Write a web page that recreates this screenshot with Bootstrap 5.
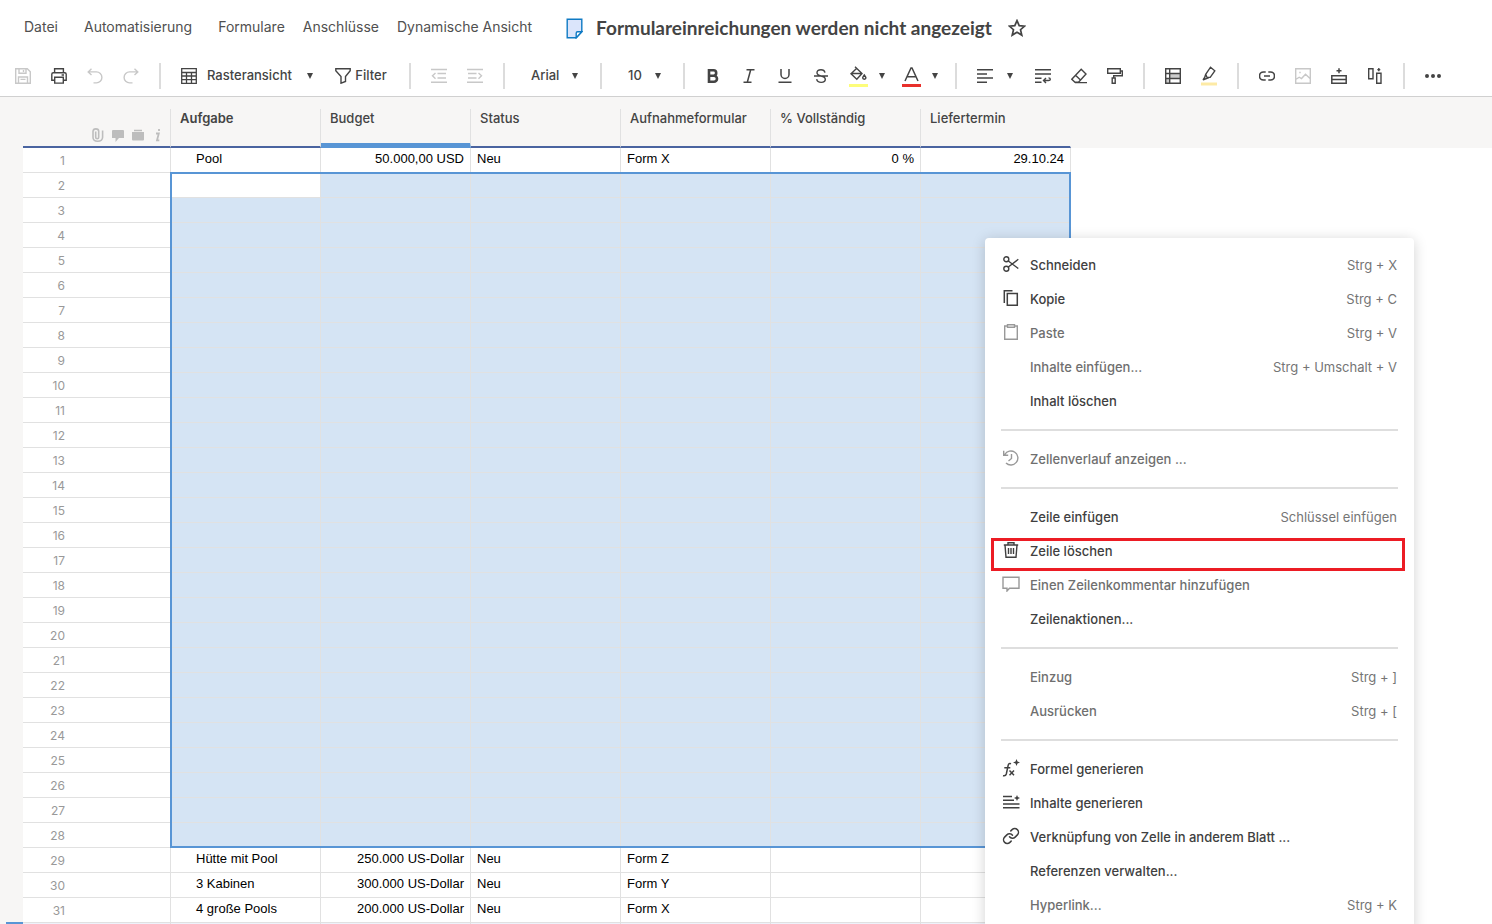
<!DOCTYPE html>
<html lang="de">
<head>
<meta charset="utf-8">
<meta name="viewport" content="width=device-width, initial-scale=1">
<title>Formulareinreichungen werden nicht angezeigt</title>
<link rel="stylesheet" href="https://cdn.jsdelivr.net/npm/bootstrap@5.3.0/dist/css/bootstrap.min.css">
<style>
  :root { --ink: #444; --muted: #757575; --line: #e1e1e1; --panel: #f7f6f5; --accent: #5895d5; --sel: #d5e4f4; }
  body { font-family: Inter, "Liberation Sans", sans-serif; font-size: 13px; line-height: 20px; color: var(--ink); background: #fff; }
  svg { display: block; fill: none; stroke: currentColor; flex: none; }
  .ic { width: 16px; height: 16px; }
  .ic:not([stroke-width]) { stroke-width: 1.4; }

  .menubar { height: 56px; padding: 0 24px; }
  .menubar .nav { gap: 18px; }
  .menubar .nav-link { padding: 0; color: #505050; font-size: 14px; line-height: 20px; padding-bottom: 2px; }
  .menubar .nav-wide { margin-right: 8px; }
  .menubar h1 { font: 700 19px/24px Lato, "Open Sans", sans-serif; }
  .doc-icon { margin-left: 34px; margin-right: 13px; color: #0f7ac4; }
  .menubar .btn { color: var(--ink); }

  .tools { height: 41px; padding-left: 5px; border-bottom: 1px solid #d0d0d0; }
  .tools .btn { --bs-btn-padding-x: 0; --bs-btn-padding-y: 0; --bs-btn-border-width: 0; --bs-btn-color: var(--ink); --bs-btn-font-size: 13px; --bs-btn-disabled-opacity: 1; --bs-btn-disabled-color: #c8c8c8;
    height: 36px; width: 36px; display: flex; align-items: center; justify-content: center; flex: none; }
  .tools .btn-filter { width: 74px; gap: 4px; font-weight: 500; padding-right: 2px; }
  .tools .btn-split { width: 53px; justify-content: flex-start; padding-left: 10px; gap: 11px; }
  .tools .btn-align { width: 58px; justify-content: flex-start; padding-left: 10px; gap: 14px; }
  .vsep { width: 2px; height: 26px; margin: 0 10px; background: #dcdcdc; flex: none; }
  .caret { width: 6px; height: 6px; fill: currentColor; stroke: none; }
  .tools .form-select { border: 0; padding: 0; height: 36px; font-size: 13px; font-weight: 500; color: var(--ink); background-color: transparent; flex: none;
    --bs-form-select-bg-img: url("data:image/svg+xml,%3csvg xmlns='http://www.w3.org/2000/svg' viewBox='0 0 6 6'%3e%3cpath d='M0 0h6L3 6z' fill='%23444'/%3e%3c/svg%3e");
    background-image: var(--bs-form-select-bg-img); background-size: 6px 6px; }
  .view-pick { width: 154px; padding-left: 10px; gap: 10px; }
  .view-pick .form-select { width: 118px; background-position: right 12px center; }
  .tools .font-pick { width: 75px; padding-left: 16px; background-position: right 12px center; }
  .tools .size-pick { width: 61px; padding-left: 16px; background-position: right 12px center; }

  .sheet { background: linear-gradient(var(--panel), var(--panel)) 0 0 / 100% 51px no-repeat, linear-gradient(var(--panel), var(--panel)) 0 0 / 23px 100% no-repeat; padding-left: 23px; }
  .grid-wrap { padding-top: 12px; }
  .sheet-grid { width: 1048px; table-layout: fixed; border-collapse: separate; border-spacing: 0; }
  .sheet-grid th, .sheet-grid td { border-right: 1px solid var(--line); white-space: nowrap; overflow: hidden; }
  .sheet-grid thead th { height: 39px; padding: 0 9px; vertical-align: top; font-weight: 500; line-height: 18px; border-bottom: 2px solid #4a64a0; }
  .sheet-grid thead th:last-child { border-right-color: transparent; }
  .sheet-grid thead th.first { font-weight: 600; }
  .sheet-grid thead th.active { border-bottom: 5px solid var(--accent); }
  .sheet-grid tbody td, .sheet-grid tbody th { height: 25px; padding: 0 6px; border-bottom: 1px solid var(--line); font: 13px/22px "Liberation Sans", Arial, sans-serif; color: #000; vertical-align: top; background: #fff; }
  .sheet-grid tbody th { font: 12px/22px Inter, sans-serif; color: #999; text-align: right; padding: 2px 105px 0 0; }
  .sheet-grid tbody td.task { padding-left: 25px; }
  .sheet-grid tbody tr.picked td { background: var(--sel); }
  .sheet-grid tbody tr.picked td.origin { background: #fff; }
  .sheet-grid tbody tr.next > * { background: #eef2fb; }
  .row-marks { color: #bdbdbd; padding-top: 19px; padding-right: 2px; }
  .row-marks span { width: 20px; display: flex; justify-content: center; }
  .selection { left: 147px; top: 75px; width: 901px; height: 676px; border: 2px solid var(--accent); pointer-events: none; }
  .gutter-mark { left: 6px; bottom: 0; width: 17px; height: 2px; background: var(--accent); }

  .context { left: 985px; top: 238px; width: 429px; padding: 10px 16px; background: #fff; border-radius: 4px; box-shadow: 0 2px 14px rgba(0,0,0,.18); z-index: 5; }
  .context button { width: 100%; height: 34px; padding: 0 1px 0 1px; border: 0; background: none; color: #404040; font-weight: 500; text-align: left; position: relative; }
  .context .slot { width: 18px; margin-right: 10px; padding-bottom: 2px; display: flex; justify-content: center; }
  .context kbd { margin-left: auto; padding: 0; background: none; font: 400 13px/20px Inter, sans-serif; color: var(--muted); }
  .context button:disabled { color: #6f6f6f; }
  .context button:disabled svg { color: #999; }
  .context hr { margin: 11px 0; border: 0; height: 2px; background: #dedede; opacity: 1; }
  .context .ring::after { content: ""; position: absolute; inset: 4px -7px -3px -10px; border: 3px solid #ec1c24; }
</style>
</head>
<body class="vh-100 overflow-hidden d-flex flex-column position-relative">

<header class="menubar d-flex align-items-center flex-shrink-0">
  <nav class="nav flex-nowrap text-nowrap" aria-label="Hauptmenü">
    <a class="nav-link nav-wide" href="#">Datei</a>
    <a class="nav-link nav-wide" href="#">Automatisierung</a>
    <a class="nav-link" href="#">Formulare</a>
    <a class="nav-link" href="#">Anschlüsse</a>
    <a class="nav-link" href="#">Dynamische Ansicht</a>
  </nav>
  <svg class="doc-icon" width="17" height="21" viewBox="0 0 17 21" stroke-width="1.4"><path fill="#dbe5fb" d="M1.2 1.2h14.600v12.600l-5.600 6H1.200z"/><path fill="#fff" d="M15.800 13.800h-4.200q-1.400 0-1.400 1.400v4.600z"/></svg>
  <h1 class="m-0 text-nowrap">Formulareinreichungen werden nicht angezeigt</h1>
  <button type="button" class="btn p-0 border-0 ms-3" aria-label="Favorit"><svg width="18" height="18" viewBox="0 0 18 18" stroke-width="1.7"><path d="m9 1.600 2.200 5 5.400.5-4.100 3.600 1.300 5.400L9 13.200l-4.800 2.900 1.300-5.400-4.100-3.600 5.400-.5z"/></svg></button>
</header>

<div class="tools d-flex align-items-center flex-shrink-0" role="toolbar" aria-label="Werkzeuge">
  <button class="btn" disabled aria-label="Speichern"><svg class="ic" viewBox="0 0 16 16"><path d="M.7.7h11.600l3 3v11.600H.7zM4 .7v4.600h7V.7M8.500 2v2M3.500 15V9h9v6M5.500 11.400h5"/></svg></button>
  <button class="btn" aria-label="Drucken"><svg class="ic" viewBox="0 0 16 16"><path d="M3.600 4.600V.8h8.800v3.800M3.600 12.200H.8V6.300q0-1.500 1.500-1.500h11.400q1.500 0 1.500 1.500v5.900h-2.800M3.700 9.200h8.600v5.900H3.700zM10.600 7h2.400"/></svg></button>
  <button class="btn" disabled aria-label="Rückgängig"><svg class="ic" viewBox="0 0 16 16"><path d="M4.500.8 1.200 3.900l3.300 3.100M1.200 3.900h8.200a5.500 5.500 0 0 1 0 11H6.500"/></svg></button>
  <button class="btn" disabled aria-label="Wiederholen"><svg class="ic" viewBox="0 0 16 16"><path d="m11.500.8 3.300 3.100L11.500 7M14.800 3.900H6.600a5.500 5.500 0 0 0 0 11h2.900"/></svg></button>
  <div class="vsep"></div>
  <div class="view-pick d-flex align-items-center flex-shrink-0">
    <svg class="ic" viewBox="0 0 16 16" stroke-width="1.3"><path d="M.7.7h14.600v14.600H.7zM.7 4.500h14.600M.7 8h14.600M.7 11.600h14.600M5.500 4.500v11M10.500 4.500v11"/></svg>
    <select class="form-select" aria-label="Ansicht"><option>Rasteransicht</option></select>
  </div>
  <button class="btn btn-filter"><svg class="ic" viewBox="0 0 16 16"><path d="M.8.8h14.400v2L10.500 8.500v5l-4.500 1.700V8.500L.8 2.800z"/></svg>Filter</button>
  <div class="vsep"></div>
  <button class="btn" disabled aria-label="Ausrücken"><svg class="ic" viewBox="0 0 16 16"><path d="M0 1.500h16M6.500 5.500H15M6.500 10H15M0 14.300h16M4.500 5 1.500 7.800l3 2.900"/></svg></button>
  <button class="btn" disabled aria-label="Einzug"><svg class="ic" viewBox="0 0 16 16"><path d="M0 1.500h16M1 5.500h8.500M1 10h8.500M0 14.300h16M11.500 5l3 2.800-3 2.900"/></svg></button>
  <div class="vsep"></div>
  <select class="form-select font-pick" aria-label="Schriftart"><option>Arial</option></select>
  <div class="vsep"></div>
  <select class="form-select size-pick" aria-label="Schriftgröße"><option>10</option></select>
  <div class="vsep"></div>
  <button class="btn" aria-label="Fett"><svg class="ic" viewBox="0 0 16 16" stroke-width="2.600"><path d="M4 2.300h4.500a2.700 2.700 0 0 1 0 5.400H4zM4 7.700h5a3 3 0 0 1 0 6H4z"/></svg></button>
  <button class="btn" aria-label="Kursiv"><svg class="ic" viewBox="0 0 16 16" stroke-width="1.500"><path d="M5.500 1.700h8M2.500 14.300h8M9.700 1.700 6.300 14.300"/></svg></button>
  <button class="btn" aria-label="Unterstrichen"><svg class="ic" viewBox="0 0 16 16" stroke-width="1.500"><path d="M4 1v5.500a4 4 0 0 0 8 0V1M1.500 14.300h13"/></svg></button>
  <button class="btn" aria-label="Durchgestrichen"><svg class="ic" viewBox="0 0 16 16"><path d="M12 4.600C11.600 2.700 10.200 1.700 8 1.700S4 2.800 4 4.800C4 6.700 5.500 7.400 8 8s4.300 1.300 4.300 3.300-1.700 3.100-4.100 3.100-4.200-1.200-4.500-3.200M1 8h14"/></svg></button>
  <button class="btn btn-split" aria-label="Füllfarbe"><svg width="19" height="22" viewBox="0 0 19 22" stroke-width="1.400"><path d="M6 1.800 13 8.500 7.800 14.200 2 8.700 7.800 3.300M2.300 8.500H13"/><path d="M15.300 9.800q-3.200 4.300 0 4.500 3.200-.2 0-4.500z"/><path d="M0 20.500h19" stroke="#fdfd7a" stroke-width="3"/></svg><svg class="caret" viewBox="0 0 6 6"><path d="M0 0h6L3 6z"/></svg></button>
  <button class="btn btn-split" aria-label="Textfarbe"><svg width="19" height="22" viewBox="0 0 19 22" stroke-width="1.500"><path d="M3 16 9 3h1l6 13M5 11.800h9"/><path d="M0 20.500h19" stroke="#e8302b" stroke-width="3"/></svg><svg class="caret" viewBox="0 0 6 6"><path d="M0 0h6L3 6z"/></svg></button>
  <div class="vsep"></div>
  <button class="btn btn-align" aria-label="Ausrichtung"><svg class="ic" viewBox="0 0 16 16"><path d="M0 1.700h16M0 6h10M0 10h16M0 14.300h10"/></svg><svg class="caret" viewBox="0 0 6 6"><path d="M0 0h6L3 6z"/></svg></button>
  <button class="btn" aria-label="Umbruch"><svg class="ic" viewBox="0 0 16 16"><path d="M0 1.700h16M0 6h16M0 10.200h6.500M0 14.300h6.500M8.500 12.500h5q1.800 0 1.800-1.300T13.500 9.900M11 10l-2.500 2.500L11 15"/></svg></button>
  <button class="btn" aria-label="Formatierung löschen"><svg class="ic" viewBox="0 0 16 16"><path d="M10.200 1.300 15 6 7.500 14.200H4L.8 11.200zM4.500 7.300l5 4.700M4 14.600h12"/></svg></button>
  <button class="btn" aria-label="Format übertragen"><svg class="ic" viewBox="0 0 16 16"><path d="M.7.800h12.600v4.400H.7zM13.300 3h2v4.700H6.700V10M5.200 10h3v5.300h-3z"/></svg></button>
  <div class="vsep"></div>
  <button class="btn" aria-label="Bedingte Formatierung"><svg class="ic" viewBox="0 0 16 16"><path d="M4.500 5.500h11v5h-11zM.7 10.500h4v5h-4z" fill="#ccc" stroke="none"/><path d="M.7.700h14.600v14.600H.7zM.7 5.500h14.600M.7 10.500h14.600M4.700.7v14.600"/></svg></button>
  <button class="btn" aria-label="Hervorheben"><svg width="16" height="20" viewBox="0 0 16 20" stroke-width="1.400"><path d="m9.500 1.200 4.300 3.600-4.600 6.600H6L4.700 8.300zM4.700 8.300 3 13.500l5-1.800M2 14l2-3"/><path d="M0 18h16" stroke="#fdeaa5" stroke-width="3"/></svg></button>
  <div class="vsep"></div>
  <button class="btn" aria-label="Link"><svg class="ic" viewBox="0 0 16 16" stroke-width="1.600"><path d="M6.700 4H4.500a3.700 3.700 0 0 0 0 8h2.200M9.300 4h2.200a3.700 3.700 0 0 1 0 8H9.300M5 8h6"/></svg></button>
  <button class="btn" disabled aria-label="Bild"><svg class="ic" viewBox="0 0 16 16"><path d="M.7.700h14.600v14.600H.7zM.7 11.500l3.500-2.300 2.300 1.300 4-4.300 4.800 4.500M4.300 4.500h1.400"/></svg></button>
  <button class="btn" aria-label="Zeile einfügen"><svg class="ic" viewBox="0 0 16 16" stroke-width="1.500"><path d="M.8 7.800h14.400v7.500H.8zM.8 11.500h14.400M8 .2v5M5.500 2.700h5"/></svg></button>
  <button class="btn" aria-label="Spalte einfügen"><svg class="ic" viewBox="0 0 16 16"><path d="M1.700.8h4.300v9.900H1.700zM9.700 5.300H14v9.900H9.700zM11.800 0v3.200M10.300 1.600h3"/></svg></button>
  <div class="vsep"></div>
  <button class="btn" aria-label="Mehr"><svg class="ic" viewBox="0 0 16 16"><path style="fill:currentColor;stroke:none" d="M0 8a2 2 0 1 0 4 0 2 2 0 1 0-4 0zM6 8a2 2 0 1 0 4 0 2 2 0 1 0-4 0zM12 8a2 2 0 1 0 4 0 2 2 0 1 0-4 0z"/></svg></button>
</div>

<main class="sheet flex-grow-1 overflow-hidden">
  <div class="grid-wrap position-relative">
    <table class="sheet-grid">
      <colgroup><col style="width:148px"><col><col><col><col><col><col></colgroup>
      <thead>
        <tr>
          <th class="p-0" aria-label="Zeileninfo">
            <div class="row-marks d-flex justify-content-end">
              <span><svg width="12" height="14" viewBox="0 0 12 14" stroke-width="1.600"><path d="M3.700 3.500v5.700q0 1.500 1.500 1.500t1.500-1.500V3.300Q6.700.9 3.900.9T1 3.500v5.700q0 4 4.700 4t4.900-4V2.500"/></svg></span>
              <span><svg width="12" height="14" viewBox="0 0 12 14"><path style="fill:currentColor;stroke:none" d="M0 3q0-1 1-1h10q1 0 1 1v7H7l-3.500 4v-4H0z"/></svg></span>
              <span><svg width="12" height="14" viewBox="0 0 12 14"><path style="fill:currentColor;stroke:none" d="M2 1.800h8v1.400H2zM0 4h12v7.500q0 1-1 1H1q-1 0-1-1z"/></svg></span>
              <span><svg width="6" height="14" viewBox="0 0 6 14" stroke-width="1.800"><path d="M1 5.500h2.800L2 12.300h2.300M4 1v2"/></svg></span>
            </div>
          </th>
          <th class="first">Aufgabe</th><th class="active">Budget</th><th>Status</th><th>Aufnahmeformular</th><th>% Vollständig</th><th>Liefertermin</th>
        </tr>
      </thead>
      <tbody id="rows"></tbody>
    </table>
    <div class="selection position-absolute"></div>
  </div>
</main>
<div class="gutter-mark position-absolute"></div>

<div class="context position-absolute" role="menu">
  <button class="d-flex align-items-center"><span class="slot"><svg class="ic" viewBox="0 0 16 16"><circle cx="3.300" cy="3.300" r="2.500"/><circle cx="3.300" cy="12.700" r="2.500"/><path d="m5.300 5 10 7.500M5.300 11l10-7.700"/></svg></span>Schneiden<kbd>Strg + X</kbd></button>
  <button class="d-flex align-items-center"><span class="slot"><svg class="ic" viewBox="0 0 16 16" stroke-width="1.500"><path d="M4.300 3.500h10v11.700h-10zM1.300 13V.8h8.200"/></svg></span>Kopie<kbd>Strg + C</kbd></button>
  <button class="d-flex align-items-center" disabled><span class="slot"><svg class="ic" viewBox="0 0 16 16"><path d="M4.500 2H1.700v13.300h12.600V2h-2.800M4.500.7h7v2.600h-7z"/></svg></span>Paste<kbd>Strg + V</kbd></button>
  <button class="d-flex align-items-center" disabled><span class="slot"></span>Inhalte einfügen...<kbd>Strg + Umschalt + V</kbd></button>
  <button class="d-flex align-items-center"><span class="slot"></span>Inhalt löschen</button>
  <hr>
  <button class="d-flex align-items-center" disabled><span class="slot"><svg class="ic" viewBox="0 0 16 16"><path d="M1.800 4.500A7 7 0 1 1 3 13M.7.800v4.400h4.500M8.500 4v4.500L5.500 11"/></svg></span>Zellenverlauf anzeigen ...</button>
  <hr>
  <button class="d-flex align-items-center"><span class="slot"></span>Zeile einfügen<kbd>Schlüssel einfügen</kbd></button>
  <button class="d-flex align-items-center ring"><span class="slot"><svg class="ic" viewBox="0 0 16 16"><path d="M.8 3h14.400M5 3V.7h6V3M2 3l1 12.300h10L14 3M5.500 6v6M8 6v6M10.500 6v6"/></svg></span>Zeile löschen</button>
  <button class="d-flex align-items-center" disabled><span class="slot"><svg width="18" height="16" viewBox="0 0 18 16" stroke-width="1.400"><path d="M1 1.200h16v11H7.500L5 15v-2.800H1z"/></svg></span>Einen Zeilenkommentar hinzufügen</button>
  <button class="d-flex align-items-center"><span class="slot"></span>Zeilenaktionen...</button>
  <hr>
  <button class="d-flex align-items-center" disabled><span class="slot"></span>Einzug<kbd>Strg + ]</kbd></button>
  <button class="d-flex align-items-center" disabled><span class="slot"></span>Ausrücken<kbd>Strg + [</kbd></button>
  <hr>
  <button class="d-flex align-items-center"><span class="slot"><svg width="18" height="18" viewBox="0 0 18 18" stroke-width="1.500"><path d="M9 4.700Q6.800 3.700 6.200 6.200L4.300 15q-.6 2.300-3.300 1.700M2.300 8.700h6M7.500 11.500l4.500 4.700M12 11.500l-4.500 4.700"/><path style="fill:currentColor;stroke:none" d="m14.500 0 1 2.500 2.500 1-2.500 1-1 2.500-1-2.500-2.500-1 2.500-1z"/></svg></span>Formel generieren</button>
  <button class="d-flex align-items-center"><span class="slot"><svg width="18" height="16" viewBox="0 0 18 16" stroke-width="1.400"><path d="M1 2.500h9M1 6.200h11M1 10h16.500M1 13.700h16.500"/><path style="fill:currentColor;stroke:none" d="m15 1 .9 2.100L18 4l-2.100.9L15 7l-.9-2.100L12 4l2.100-.9z"/></svg></span>Inhalte generieren</button>
  <button class="d-flex align-items-center"><span class="slot"><svg width="18" height="18" viewBox="0 0 24 24" stroke-width="2" stroke-linecap="round"><path d="M10 13a5 5 0 0 0 7.540.54l3-3a5 5 0 0 0-7.070-7.070l-1.720 1.710M14 11a5 5 0 0 0-7.540-.54l-3 3a5 5 0 0 0 7.070 7.070l1.710-1.710"/></svg></span>Verknüpfung von Zelle in anderem Blatt ...</button>
  <button class="d-flex align-items-center"><span class="slot"></span>Referenzen verwalten...</button>
  <button class="d-flex align-items-center" disabled><span class="slot"></span>Hyperlink...<kbd>Strg + K</kbd></button>
</div>

<script src="https://cdn.jsdelivr.net/npm/bootstrap@5.3.0/dist/js/bootstrap.bundle.min.js"></script>
<script>
  const data = {
    1: ["Pool", "50.000,00 USD", "Neu", "Form X", "0 %", "29.10.24"],
    29: ["Hütte mit Pool", "250.000 US-Dollar", "Neu", "Form Z", "", ""],
    30: ["3 Kabinen", "300.000 US-Dollar", "Neu", "Form Y", "", ""],
    31: ["4 große Pools", "200.000 US-Dollar", "Neu", "Form X", "", ""]
  };
  const body = document.getElementById("rows");
  for (let n = 1; n <= 32; n++) {
    const tr = body.insertRow();
    const th = document.createElement("th");
    th.scope = "row";
    th.textContent = n < 32 ? n : "";
    tr.append(th);
    if (n >= 2 && n <= 28) tr.className = "picked";
    if (n === 32) tr.className = "next";
    (data[n] || Array(6).fill("")).forEach((text, i) => {
      const td = tr.insertCell();
      td.textContent = text;
      if (i === 0) td.classList.add("task");
      if (i === 1 || i > 3) td.classList.add("text-end");
      if (n === 2 && i === 0) td.classList.add("origin");
    });
  }
</script>
</body>
</html>
